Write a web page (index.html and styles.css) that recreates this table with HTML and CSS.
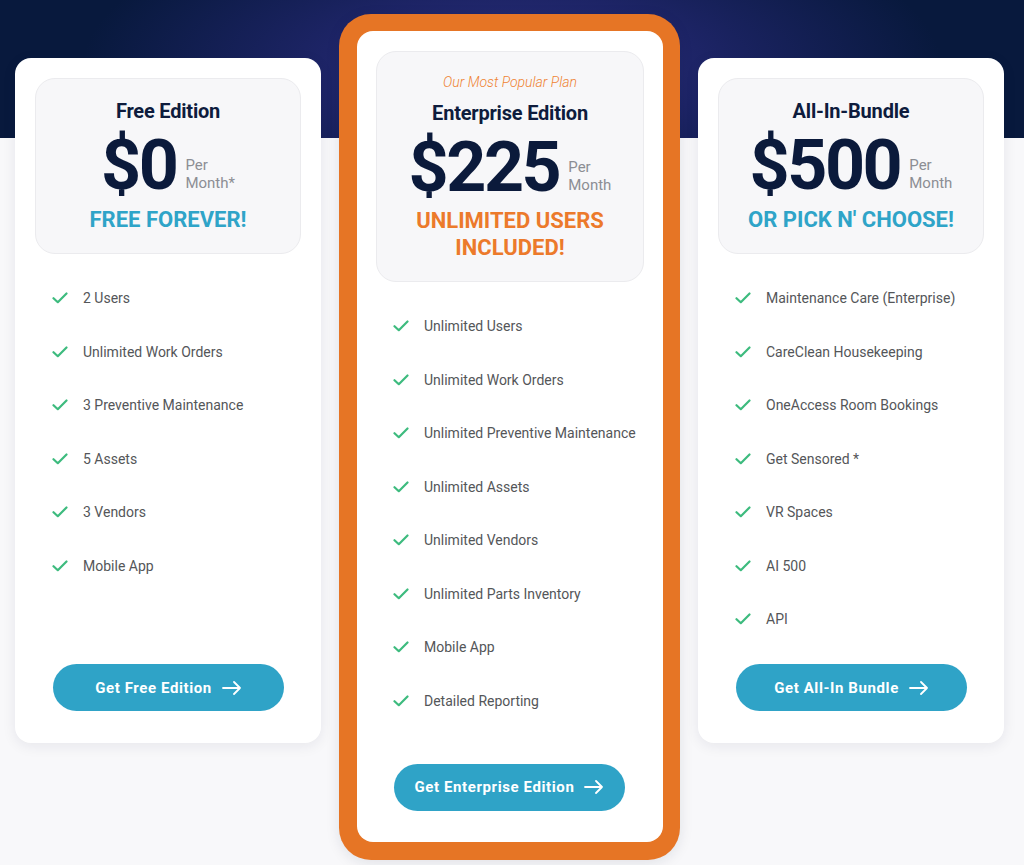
FILE: index.html
```html
<!DOCTYPE html>
<html lang="en">
<head>
<meta charset="utf-8">
<title>Pricing</title>
<link rel="stylesheet" href="styles.css">
</head>
<body>
<div class="page">
  <div class="plans">
    <div class="card side">
      <div class="head">
        <h2 class="title">Free Edition</h2>
        <div class="price-row"><span class="price">$0</span><span class="per">Per<br>Month*</span></div>
        <div class="tag blue">FREE FOREVER!</div>
      </div>
      <ul class="features">
        <li><svg class="check" viewBox="0 0 16 12"><path d="M1.5 6.2 L5.8 10.2 L14.5 1.5"/></svg>2 Users</li>
        <li><svg class="check" viewBox="0 0 16 12"><path d="M1.5 6.2 L5.8 10.2 L14.5 1.5"/></svg>Unlimited Work Orders</li>
        <li><svg class="check" viewBox="0 0 16 12"><path d="M1.5 6.2 L5.8 10.2 L14.5 1.5"/></svg>3 Preventive Maintenance</li>
        <li><svg class="check" viewBox="0 0 16 12"><path d="M1.5 6.2 L5.8 10.2 L14.5 1.5"/></svg>5 Assets</li>
        <li><svg class="check" viewBox="0 0 16 12"><path d="M1.5 6.2 L5.8 10.2 L14.5 1.5"/></svg>3 Vendors</li>
        <li><svg class="check" viewBox="0 0 16 12"><path d="M1.5 6.2 L5.8 10.2 L14.5 1.5"/></svg>Mobile App</li>
      </ul>
      <a class="btn" href="#">Get Free Edition<svg class="arrow" viewBox="0 0 20 14"><path d="M1 7 H18 M12 1 L18 7 L12 13"/></svg></a>
    </div>

    <div class="featured">
      <div class="card inner">
        <div class="head tall">
          <div class="popular">Our Most Popular Plan</div>
          <h2 class="title">Enterprise Edition</h2>
          <div class="price-row"><span class="price">$225</span><span class="per">Per<br>Month</span></div>
          <div class="tag orange">UNLIMITED USERS<br>INCLUDED!</div>
        </div>
        <ul class="features">
          <li><svg class="check" viewBox="0 0 16 12"><path d="M1.5 6.2 L5.8 10.2 L14.5 1.5"/></svg>Unlimited Users</li>
          <li><svg class="check" viewBox="0 0 16 12"><path d="M1.5 6.2 L5.8 10.2 L14.5 1.5"/></svg>Unlimited Work Orders</li>
          <li><svg class="check" viewBox="0 0 16 12"><path d="M1.5 6.2 L5.8 10.2 L14.5 1.5"/></svg>Unlimited Preventive Maintenance</li>
          <li><svg class="check" viewBox="0 0 16 12"><path d="M1.5 6.2 L5.8 10.2 L14.5 1.5"/></svg>Unlimited Assets</li>
          <li><svg class="check" viewBox="0 0 16 12"><path d="M1.5 6.2 L5.8 10.2 L14.5 1.5"/></svg>Unlimited Vendors</li>
          <li><svg class="check" viewBox="0 0 16 12"><path d="M1.5 6.2 L5.8 10.2 L14.5 1.5"/></svg>Unlimited Parts Inventory</li>
          <li><svg class="check" viewBox="0 0 16 12"><path d="M1.5 6.2 L5.8 10.2 L14.5 1.5"/></svg>Mobile App</li>
          <li><svg class="check" viewBox="0 0 16 12"><path d="M1.5 6.2 L5.8 10.2 L14.5 1.5"/></svg>Detailed Reporting</li>
        </ul>
        <a class="btn btn-featured" href="#">Get Enterprise Edition<svg class="arrow" viewBox="0 0 20 14"><path d="M1 7 H18 M12 1 L18 7 L12 13"/></svg></a>
      </div>
    </div>

    <div class="card side">
      <div class="head">
        <h2 class="title">All-In-Bundle</h2>
        <div class="price-row"><span class="price">$500</span><span class="per">Per<br>Month</span></div>
        <div class="tag blue">OR PICK N' CHOOSE!</div>
      </div>
      <ul class="features">
        <li><svg class="check" viewBox="0 0 16 12"><path d="M1.5 6.2 L5.8 10.2 L14.5 1.5"/></svg>Maintenance Care (Enterprise)</li>
        <li><svg class="check" viewBox="0 0 16 12"><path d="M1.5 6.2 L5.8 10.2 L14.5 1.5"/></svg>CareClean Housekeeping</li>
        <li><svg class="check" viewBox="0 0 16 12"><path d="M1.5 6.2 L5.8 10.2 L14.5 1.5"/></svg>OneAccess Room Bookings</li>
        <li><svg class="check" viewBox="0 0 16 12"><path d="M1.5 6.2 L5.8 10.2 L14.5 1.5"/></svg>Get Sensored *</li>
        <li><svg class="check" viewBox="0 0 16 12"><path d="M1.5 6.2 L5.8 10.2 L14.5 1.5"/></svg>VR Spaces</li>
        <li><svg class="check" viewBox="0 0 16 12"><path d="M1.5 6.2 L5.8 10.2 L14.5 1.5"/></svg>AI 500</li>
        <li><svg class="check" viewBox="0 0 16 12"><path d="M1.5 6.2 L5.8 10.2 L14.5 1.5"/></svg>API</li>
      </ul>
      <a class="btn" href="#">Get All-In Bundle<svg class="arrow" viewBox="0 0 20 14"><path d="M1 7 H18 M12 1 L18 7 L12 13"/></svg></a>
    </div>
  </div>
</div>
</body>
</html>
```

FILE: styles.css
```css
* { box-sizing: border-box; }
html, body { margin: 0; padding: 0; }
body {
  font-family: Roboto, "Liberation Sans", Arial, sans-serif;
  background: #f8f8fa;
  width: 1024px;
  height: 865px;
  overflow: hidden;
}
.page {
  height: 865px;
  background:
    radial-gradient(ellipse 430px 170px at 50% 70px, #2e3180 0%, #1d2466 45%, #08193d 100%) top left / 100% 138px no-repeat,
    #f8f8fa;
}
.plans {
  display: flex;
  align-items: flex-start;
  gap: 18px;
  padding: 14px 0 0 15px;
}
.card {
  background: #fff;
  border-radius: 16px;
  width: 306px;
  display: flex;
  flex-direction: column;
  padding: 20px 20px 32px;
}
.side {
  margin-top: 44px;
  height: 685px;
  box-shadow: 0 3px 14px rgba(20, 30, 60, 0.08);
}
.featured {
  background: #e67525;
  border-radius: 32px;
  padding: 17px 17px 18px 18px;
  box-shadow: 0 3px 14px rgba(20, 30, 60, 0.10);
}
.inner {
  height: 811px;
  padding: 20px 19px 31px 19px;
}
.head {
  background: #f7f7f9;
  border: 1px solid #ebebee;
  border-radius: 20px;
  height: 176px;
  display: flex;
  flex-direction: column;
  align-items: center;
  padding-top: 19px;
}
.head.tall {
  height: 231px;
  padding-top: 21px;
}
.popular {
  font-style: italic;
  font-weight: 300;
  font-size: 14px;
  line-height: 18px;
  color: #ef8332;
  margin-bottom: 9px;
}
.title {
  margin: 0;
  font-size: 20px;
  line-height: 26px;
  font-weight: 700;
  color: #0e1c3d;
  letter-spacing: -0.2px;
}
.price-row {
  display: flex;
  align-items: flex-end;
  height: 82px;
}
.price {
  font-size: 70px;
  line-height: 82px;
  font-weight: 700;
  color: #0b1a3b;
  letter-spacing: -2.5px;
}
.per {
  font-size: 15px;
  line-height: 18px;
  color: #8c8e94;
  margin-left: 9px;
  margin-bottom: 14px;
}
.tag {
  font-size: 22px;
  line-height: 27px;
  font-weight: 700;
  text-align: center;
}
.tag.orange {
  margin-top: -1px;
}
.blue { color: #2fa4c8; }
.orange { color: #ec7a2b; }
.features {
  list-style: none;
  margin: 0;
  padding: 34px 0 0 17px;
  display: flex;
  flex-direction: column;
  gap: 33.5px;
}
.features li {
  display: flex;
  align-items: center;
  font-size: 14px;
  line-height: 20px;
  color: #545659;
}
.check {
  width: 16px;
  height: 12px;
  margin-right: 15px;
  flex: none;
}
.check path {
  fill: none;
  stroke: #3dbb7e;
  stroke-width: 2.2;
  stroke-linecap: round;
  stroke-linejoin: round;
}
.btn {
  margin: auto 0 0 18px;
  width: 231px;
  height: 47px;
  border-radius: 24px;
  background: #2fa3c7;
  color: #fff;
  text-decoration: none;
  font-size: 15px;
  font-weight: 700;
  letter-spacing: 0.6px;
  display: flex;
  align-items: center;
  justify-content: center;
}
.btn-featured {
  margin-top: 53px;
}
.arrow {
  width: 20px;
  height: 14px;
  margin-left: 10px;
}
.arrow path {
  fill: none;
  stroke: #fff;
  stroke-width: 1.8;
  stroke-linecap: round;
  stroke-linejoin: round;
}
```
